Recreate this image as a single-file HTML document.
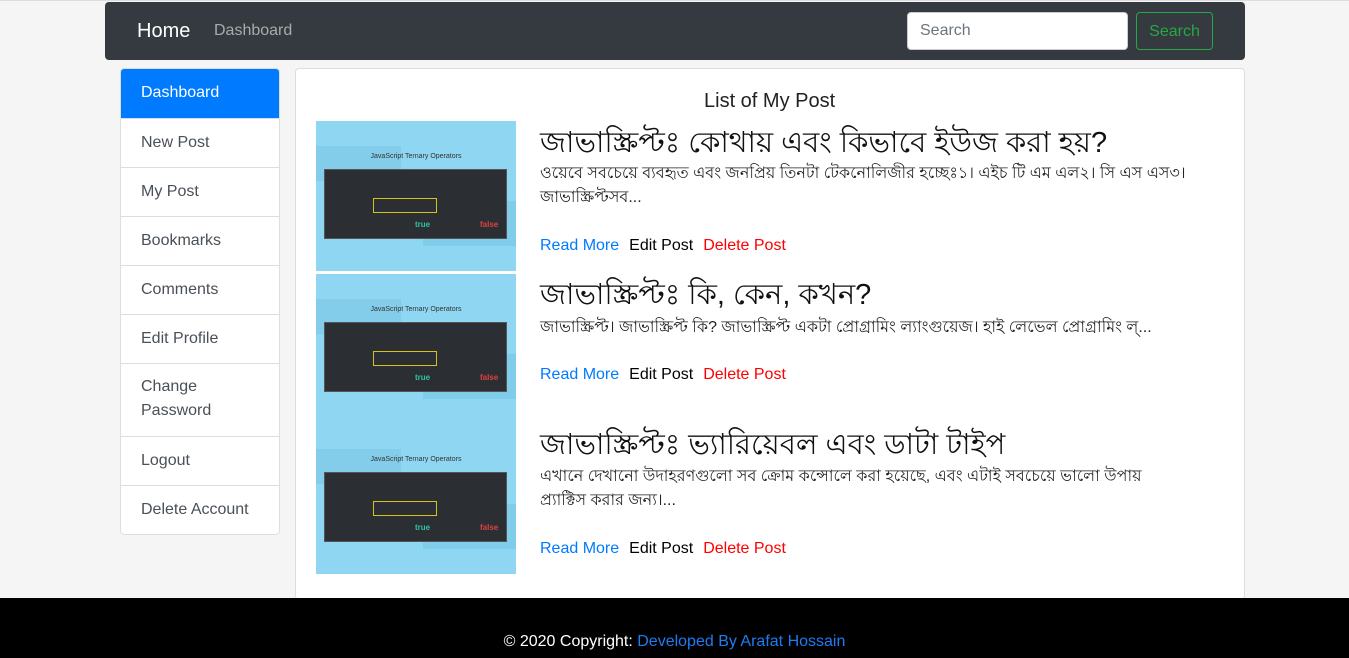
<!DOCTYPE html>
<html><head><meta charset="utf-8"><style>
*{box-sizing:border-box;margin:0;padding:0}
body{width:1349px;height:658px;background:#f5f5f5;font-family:"Liberation Sans",sans-serif;position:relative;overflow:hidden}
.topl{position:absolute;left:0;top:0;width:1349px;height:1px;background:#ddd}
.nav{position:absolute;left:105px;top:2px;width:1140px;height:58px;background:#343a40;border-radius:4px}
.nav .home{position:absolute;left:32px;top:18px;color:#fff;font-size:20px}
.nav .db{position:absolute;left:109px;top:20px;color:#aaa;font-size:16px}
.nav .si{position:absolute;left:802px;top:10px;width:221px;height:38px;background:#fff;border:1px solid #ccc;border-radius:4px;padding:9px 12px;color:#6c757d;font-size:16px}
.nav .sb{position:absolute;left:1031px;top:10px;width:77px;height:38px;border:1px solid #28a745;border-radius:4px;color:#28a745;font-size:16px;text-align:center;line-height:38px}
.side{position:absolute;left:120px;top:68px;width:160px;background:#fff;border:1px solid #ddd;border-radius:4px;overflow:hidden}
.side div{padding:0 20px;border-top:1px solid #ddd;color:#495057;font-size:16px;height:49px;line-height:48px}
.side div:first-child{background:#007bff;color:#fff;border-top:0;height:49px;line-height:47px}
.side div.two{line-height:24px;padding-top:11px;height:73px}
.main{position:absolute;left:295px;top:68px;width:950px;height:532px;background:#fff;border:1px solid #ddd;border-radius:4px}
.title{position:absolute;left:408px;top:21px;font-size:20px;color:#222}
.th{position:absolute;left:20px;width:200px;height:150px;background:#8fd6f3;overflow:hidden}
.th .a{position:absolute;left:0;top:25px;width:85px;height:35px;background:#84cdea}
.th .b{position:absolute;left:107px;top:80px;width:93px;height:45px;background:#80cceb}
.th .t{position:absolute;left:0;width:200px;top:32px;text-align:center;font-size:7px;color:#333}
.th .p{position:absolute;left:8px;top:48px;width:183px;height:70px;background:#2b2f33;border:1px solid #555}
.th .box{position:absolute;left:48px;top:28px;width:64px;height:15px;border:1px solid #d6c21c}
.th .g{position:absolute;left:90px;top:50px;color:#2ec4a0;font-size:8px;font-weight:bold}
.th .r{position:absolute;left:155px;top:50px;color:#e04040;font-size:8px;font-weight:bold}
.h{position:absolute;left:244px;font-size:29px;color:#111;white-space:nowrap}
.d{position:absolute;left:244px;width:690px;font-size:16px;line-height:24px;color:#222}
.l{position:absolute;left:244px;font-size:16px}
.l span{margin-right:10px}
.foot{position:absolute;left:0;top:598px;width:1349px;height:60px;background:#000;color:#fff;text-align:center;font-size:16px;padding-top:35px}
.foot a{color:#1e7cf2}
</style></head><body>
<div class="topl"></div>
<div class="nav"><span class="home">Home</span><span class="db">Dashboard</span><div class="si">Search</div><div class="sb">Search</div></div>
<div class="side"><div>Dashboard</div><div>New Post</div><div>My Post</div><div>Bookmarks</div><div>Comments</div><div>Edit Profile</div><div class="two">Change<br>Password</div><div>Logout</div><div>Delete Account</div></div>
<div class="main">
<div class="title">List of My Post</div>
<div class="th" style="top:52px"><div class="a"></div><div class="b"></div><div class="t">JavaScript Ternary Operators</div><div class="p"><div class="box"></div><div class="g">true</div><div class="r">false</div></div></div>
<div class="th" style="top:205px"><div class="a"></div><div class="b"></div><div class="t">JavaScript Ternary Operators</div><div class="p"><div class="box"></div><div class="g">true</div><div class="r">false</div></div></div>
<div class="th" style="top:355px"><div class="a"></div><div class="b"></div><div class="t">JavaScript Ternary Operators</div><div class="p"><div class="box"></div><div class="g">true</div><div class="r">false</div></div></div>
<div class="h" style="top:51px">জাভাস্ক্রিপ্টঃ কোথায় এবং কিভাবে ইউজ করা হয়?</div>
<div class="d" style="top:93px">ওয়েবে সবচেয়ে ব্যবহৃত এবং জনপ্রিয় তিনটা টেকনোলিজীর হচ্ছেঃ১। এইচ টি এম এল২। সি এস এস৩। জাভাস্ক্রিপ্টসব...</div>
<div class="l" style="top:168px"><span style="color:#007bff">Read More</span><span>Edit Post</span><span style="color:red">Delete Post</span></div>
<div class="h" style="top:203px">জাভাস্ক্রিপ্টঃ কি, কেন, কখন?</div>
<div class="d" style="top:247px">জাভাস্ক্রিপ্ট। জাভাস্ক্রিপ্ট কি? জাভাস্ক্রিপ্ট একটা প্রোগ্রামিং ল্যাংগুয়েজ। হাই লেভেল প্রোগ্রামিং ল্...</div>
<div class="l" style="top:297px"><span style="color:#007bff">Read More</span><span>Edit Post</span><span style="color:red">Delete Post</span></div>
<div class="h" style="top:353px">জাভাস্ক্রিপ্টঃ ভ্যারিয়েবল এবং ডাটা টাইপ</div>
<div class="d" style="top:396px;width:640px">এখানে দেখানো উদাহরণগুলো সব ক্রোম কন্সোলে করা হয়েছে, এবং এটাই সবচেয়ে ভালো উপায় প্র্যাক্টিস করার জন্য।...</div>
<div class="l" style="top:471px"><span style="color:#007bff">Read More</span><span>Edit Post</span><span style="color:red">Delete Post</span></div>
</div>
<div class="foot">© 2020 Copyright: <a>Developed By Arafat Hossain</a></div>
</body></html>
